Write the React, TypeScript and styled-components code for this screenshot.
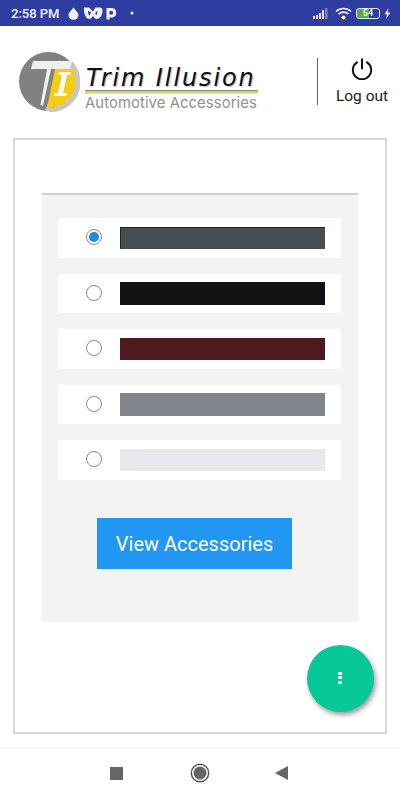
import React from "react";
import styled, { createGlobalStyle } from "styled-components";

const GlobalStyle = createGlobalStyle`
  html, body {
    margin: 0;
    padding: 0;
    background: #fff;
    font-family: Roboto, "Liberation Sans", sans-serif;
  }
`;

const Page = styled.div`
  width: 400px;
  height: 800px;
  display: flex;
  flex-direction: column;
  overflow: hidden;
`;

const StatusBar = styled.div`
  height: 26px;
  background: #2e3d9f;
  color: #f2f3fa;
  display: flex;
  align-items: center;
  justify-content: space-between;
  padding: 0 9px 0 11px;
  box-sizing: border-box;
`;

const StatusGroup = styled.div`
  display: flex;
  align-items: center;
`;

const Clock = styled.span`
  font-size: 13px;
  font-weight: 500;
  margin-right: 8px;
`;

const Battery = styled.div`
  width: 24px;
  height: 11px;
  border: 1.5px solid #dfe3f2;
  border-radius: 3px;
  box-sizing: border-box;
  margin: 0 2px 0 4px;
  display: flex;
  align-items: center;
  justify-content: center;
  font-size: 9px;
  font-weight: 700;
  color: #e8f5e0;
  background: linear-gradient(90deg, #58a84e 54%, #2e3d9f 54%);
`;

const Header = styled.header`
  height: 112px;
  flex: none;
  display: flex;
  align-items: center;
  padding: 0 12px 0 18px;
  box-sizing: border-box;
`;

const Logo = styled.div`
  display: flex;
  align-items: center;
  width: 299px;
`;

const Wordmark = styled.div`
  margin-left: 5px;
  width: 173px;
  padding-top: 13px;
`;

const BrandName = styled.div`
  font-family: "DejaVu Sans", sans-serif;
  font-style: italic;
  font-size: 24px;
  line-height: 25px;
  letter-spacing: 1.9px;
  color: #111;
  padding-left: 1px;
  margin-bottom: -2px;
  white-space: nowrap;
  text-shadow: 1px 1px 1px #bbb;
`;

const BrandRule = styled.div`
  height: 3px;
  margin-top: 1px;
  background: linear-gradient(#d9c94d, #efe59a);
  border-top: 1px solid #888;
`;

const BrandTag = styled.div`
  font-family: Inter, sans-serif;
  font-size: 14.8px;
  line-height: 17px;
  margin-top: 1px;
  color: #8f8f8f;
  white-space: nowrap;
  letter-spacing: 0.1px;
`;

const Logout = styled.div`
  display: flex;
  flex-direction: column;
  align-items: center;
  width: 71px;
  height: 47px;
  border-left: 1px solid #666;
  padding-left: 18px;
  box-sizing: border-box;
  color: #1a1a1a;
  font-size: 15.5px;
  white-space: nowrap;
  transform: translateY(-1px);
`;

const LogoutLabel = styled.span`
  margin-top: 7px;
  line-height: 18px;
`;

const Card = styled.main`
  position: relative;
  height: 596px;
  margin: 0 13px;
  border: 2px solid #d9d9d9;
  box-sizing: border-box;
  padding: 53px 27px 0;
`;

const Panel = styled.section`
  height: 429px;
  background: #f3f3f3;
  border-top: 2px solid #cfcfcf;
  box-sizing: border-box;
  padding: 23px 17px 0 16px;
  display: flex;
  flex-direction: column;
`;

const ColorList = styled.div`
  display: flex;
  flex-direction: column;
  gap: 16px;
`;

const ColorRow = styled.label`
  height: 39.5px;
  background: #fff;
  display: flex;
  align-items: center;
  padding-left: 28px;
`;

const Radio = styled.span<{ $checked?: boolean }>`
  width: 16px;
  height: 16px;
  margin-bottom: 1px;
  border-radius: 50%;
  border: 1px solid #8a8a8a;
  box-sizing: border-box;
  display: flex;
  align-items: center;
  justify-content: center;
  flex: none;
  &::after {
    content: "";
    width: 10px;
    height: 10px;
    border-radius: 50%;
    background: ${(p) => (p.$checked ? "#1e88e5" : "transparent")};
  }
`;

const Swatch = styled.span<{ $color: string; $edged?: boolean }>`
  width: 205px;
  height: 22.5px;
  margin-left: 18px;
  background: ${(p) => p.$color};
  box-shadow: ${(p) => (p.$edged ? "inset 1px 1px 0 #222" : "none")};
`;

const ViewButton = styled.button`
  align-self: flex-start;
  margin: 38px 0 0 39px;
  width: 195px;
  height: 51px;
  border: 0;
  padding: 1px 0 0;
  background: #2196f3;
  color: #fff;
  font-family: Roboto, sans-serif;
  font-size: 20px;
`;

const Fab = styled.button`
  position: absolute;
  right: 11px;
  bottom: 20px;
  width: 67px;
  height: 67px;
  border: 0;
  border-radius: 50%;
  background: #05c896;
  box-shadow: 2px 3px 5px rgba(0, 0, 0, 0.4);
  display: flex;
  flex-direction: column;
  align-items: center;
  justify-content: center;
  gap: 1.5px;
  padding: 0 2px 2px 0;
`;

const FabDot = styled.span`
  width: 4px;
  height: 3px;
  background: #e6fbf5;
`;

const NavBar = styled.nav`
  margin-top: 13px;
  flex: 1;
  border-top: 2px solid #f4f4f4;
  display: flex;
  align-items: center;
  justify-content: center;
  gap: 65px;
  padding: 0 2px 3px 0;
`;

const NavSquare = styled.span`
  width: 13px;
  height: 13px;
  margin-right: 2px;
  background: #666;
`;

const colors = ["#454e50", "#111213", "#4e1a20", "#80868c", "#e9e8ee"];

export default function App() {
  return (
    <Page>
      <GlobalStyle />
      <StatusBar>
        <StatusGroup>
          <Clock>2:58 PM</Clock>
          <svg width="11" height="13" viewBox="0 0 11 13">
            <path d="M5.5 0.5C7.5 3.5 10.5 5.5 10.5 8.2A5 4.6 0 0 1 .5 8.2C.5 5.5 3.5 3.5 5.5.5Z" fill="#f2f3fa" />
          </svg>
          <svg width="20" height="14" viewBox="0 0 20 14" style={{ marginLeft: 4 }}>
            <path
              d="M1 1.500H6L10 5.500L12.500 1.500H16A3 3 0 0 1 19.500 5C19.500 9 17 13 14 13C12 13 11 11.500 10 10C9 11.500 8 13 6 13C3 13 .5 7 1 1.500Z"
              fill="#f2f3fa"
            />
            <path d="M5 4.500C5 7 5.500 9 6.300 9.500C7 9 7.500 8 8 6.500ZM14.500 4.500C14.500 6.500 14 8.500 13.500 9.300C13 9 12.500 8 12.200 7Z" fill="#2e3d9f" />
          </svg>
          <svg width="11" height="13" viewBox="0 0 11 13" style={{ marginLeft: 3 }}>
            <path d="M2 12.500V2.500H6A3.300 3.300 0 0 1 6 9H2" fill="none" stroke="#f2f3fa" strokeWidth="3" />
          </svg>
          <svg width="4" height="4" viewBox="0 0 4 4" style={{ marginLeft: 13 }}>
            <circle cx="2" cy="2" r="1.500" fill="#f2f3fa" />
          </svg>
        </StatusGroup>
        <StatusGroup>
          <svg width="15" height="12" viewBox="0 0 15 12">
            <path d="M0 9h2v3H0zM3 8h2v4H3zM6 6h2v6H6zM9 3h2v9H9z" fill="#e3e5f2" />
            <path d="M12 1h2.500v11h-2.500z" fill="#7a85c2" />
          </svg>
          <svg width="17" height="13" viewBox="0 0 17 13" style={{ marginLeft: 7 }}>
            <path d="M1 4.500A11 11 0 0 1 16 4.500M3.500 7A7.500 7.500 0 0 1 13.500 7" fill="none" stroke="#f2f3fa" strokeWidth="1.600" />
            <circle cx="8.500" cy="10.500" r="2" fill="#f2f3fa" />
          </svg>
          <Battery>54</Battery>
          <svg width="7" height="11" viewBox="0 0 7 11" style={{ marginLeft: 2 }}>
            <path d="M4.500 0L0.500 6.200H3L2 11L6.500 4.500H3.800Z" fill="#e3e5f2" />
          </svg>
        </StatusGroup>
      </StatusBar>

      <Header>
        <Logo>
          <svg width="62" height="60" viewBox="0 0 62 60">
            <circle cx="30.500" cy="29.500" r="29.500" fill="#808181" />
            <path d="M54 9A30 30 0 0 1 32 60L27 58L50 10Z" fill="#c6c6c6" />
            <path d="M37 17H55A27 27 0 0 1 29 56Z" fill="#f6cc12" />
            <path d="M15 9H54L52 17H33L25 54L22.500 53L29 17H13Z" fill="#f0f0f0" />
            <path d="M41 20H53L52.500 23H49L45 41H49L48.500 44H36L36.500 41H40L44 23H40.500Z" fill="#fff" />
          </svg>
          <Wordmark>
            <BrandName>Trim Illusion</BrandName>
            <BrandRule />
            <BrandTag>Automotive Accessories</BrandTag>
          </Wordmark>
        </Logo>
        <Logout>
          <svg width="24" height="24" viewBox="0 0 24 24" fill="none" stroke="#111" strokeWidth="2.200" strokeLinecap="round">
            <path d="M12 1.500V11.500" />
            <path d="M6.500 4.800A10 10 0 1 0 17.500 4.800" />
          </svg>
          <LogoutLabel>Log out</LogoutLabel>
        </Logout>
      </Header>

      <Card>
        <Panel>
          <ColorList>
            {colors.map((color, i) => (
              <ColorRow key={color}>
                <Radio $checked={i === 0} />
                <Swatch $color={color} $edged={i === 0} />
              </ColorRow>
            ))}
          </ColorList>
          <ViewButton>View Accessories</ViewButton>
        </Panel>
        <Fab aria-label="More">
          <FabDot />
          <FabDot />
          <FabDot />
        </Fab>
      </Card>

      <NavBar>
        <NavSquare />
        <svg width="20" height="20" viewBox="0 0 20 20">
          <circle cx="10" cy="10" r="8.700" fill="none" stroke="#555" strokeWidth="1.400" />
          <circle cx="10" cy="10" r="6.500" fill="#666" />
        </svg>
        <svg width="13" height="16" viewBox="0 0 13 16">
          <path d="M13 1V15L0 8Z" fill="#666" />
        </svg>
      </NavBar>
    </Page>
  );
}
